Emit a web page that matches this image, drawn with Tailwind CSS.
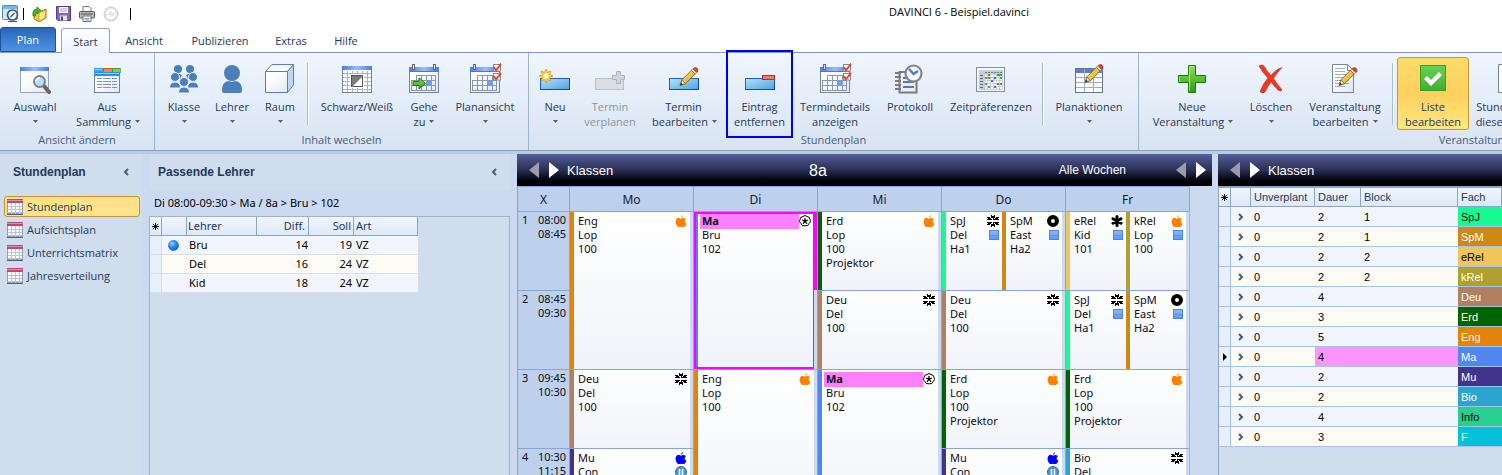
<!DOCTYPE html>
<html lang="de">
<head>
<meta charset="utf-8">
<title>DAVINCI 6 - Beispiel.davinci</title>
<script src="https://cdn.jsdelivr.net/npm/@tailwindcss/browser@4"></script>
</head>
<body class="bg-white">

<svg width="0" height="0" class="absolute" aria-hidden="true">
  <defs>
    <linearGradient id="gBar" x1="0" x2="1" y1="0" y2="0"><stop offset="0" stop-color="#4a7bea"/><stop offset=".5" stop-color="#9dbcfa"/><stop offset="1" stop-color="#4a7bea"/></linearGradient>
    <linearGradient id="gPaper" x1="0" x2="1" y1="0" y2="1"><stop offset=".3" stop-color="#fff"/><stop offset="1" stop-color="#dfe7f4"/></linearGradient>
    <linearGradient id="gSlot" x1="0" x2="1" y1="0" y2="1"><stop offset="0" stop-color="#b5e2fa"/><stop offset="1" stop-color="#4f9fe2"/></linearGradient>
    <linearGradient id="gGreen" x1="0" x2="0" y1="0" y2="1"><stop offset="0" stop-color="#8fe05c"/><stop offset="1" stop-color="#2f9a12"/></linearGradient>
    <linearGradient id="gPen" x1="0" x2="1" y1="0" y2="1"><stop offset="0" stop-color="#ffe97a"/><stop offset="1" stop-color="#d99a10"/></linearGradient>
    <radialGradient id="gBall" cx=".35" cy=".3" r=".8"><stop offset="0" stop-color="#8fd0ff"/><stop offset=".5" stop-color="#1d8cf4"/><stop offset="1" stop-color="#0b62d0"/></radialGradient>
    <linearGradient id="gBox" x1="0" x2="0" y1="0" y2="1"><stop offset="0" stop-color="#8db9fb"/><stop offset="1" stop-color="#5a96f4"/></linearGradient>
  </defs>
  <symbol id="pencil" viewBox="0 0 24 24">
    <path d="M2 22 4 15.500 15.500 4 20 8.500 8.500 20Z" fill="url(#gPen)" stroke="#7b5a14" stroke-width="1"/>
    <path d="M2 22 4 15.500 8.500 20Z" fill="#f3d9ac" stroke="#6b5a3a" stroke-width=".8"/><path d="M2 22 3 18.700 5.300 21Z" fill="#333"/>
    <path d="M15.500 4 17.500 2 22 6.500 20 8.500Z" fill="#ddd" stroke="#666" stroke-width=".8"/>
    <path d="M17.500 2 19 .8Q21 0 22.500 1.500 24 3.500 23.200 5L22 6.500Z" fill="#e8402c" stroke="#9c2013" stroke-width=".6"/>
  </symbol>
  <symbol id="slot" viewBox="0 0 32 32"><rect x="1.500" y="15.500" width="29" height="11" fill="url(#gSlot)" stroke="#1c62c4"/><path d="M30.500 15V26.500H1" fill="none" stroke="#164ea6"/></symbol>
  <symbol id="cal" viewBox="0 0 32 32" shape-rendering="crispEdges">
    <rect x="1.500" y="4.500" width="29" height="25" fill="url(#gPaper)" stroke="#74849c"/>
    <rect x="1" y="4" width="30" height="5" fill="url(#gBar)"/><path d="M1 8.500h30" stroke="#4a76d8"/>
    <path d="M8 12.500h20M3 17.500h25M3 22.500h25M3 27.500h25M3.500 17v11M8.500 12v16M13.500 12v16M18.500 12v16M23.500 12v16M27.500 12v16" stroke="#8596ad" fill="none"/>
    <rect x="4.500" y="1.500" width="2" height="5" fill="#ddd" stroke="#666"/>
  </symbol>
  <symbol id="checks" viewBox="0 0 10 18"><rect x="1.500" y="1.500" width="7" height="6.500" fill="#fff" stroke="#888"/><rect x="1.500" y="10.500" width="7" height="6.500" fill="#fff" stroke="#888"/><path d="M1.500 4 4 7 9.500 .5M1.500 13 4 16 9.500 9.500" fill="none" stroke="#f03820" stroke-width="1.800"/></symbol>
  <symbol id="sheet" viewBox="0 0 16 16" shape-rendering="crispEdges"><rect x=".5" y=".5" width="15" height="14" fill="#fff" stroke="#8fa0ba"/><rect width="16" height="4" fill="#b84a74"/><rect y="1" width="16" height="1" fill="#dc90ac"/><path d="M1 7.500h14M1 10.500h14M1 13.500h14M4.500 4v11M8.500 4v11M12.500 4v11" stroke="#b9c4d6"/><path d="M0 15.500h16" stroke="#4d6080"/></symbol>
  <symbol id="apple" viewBox="0 0 12 13"><path fill="currentColor" d="M8 0q.3 2-1.800 3.200Q6 1.200 8 0ZM6 4q1.500-1 3.300-.8Q10.500 3.500 11.300 4.500 9.800 5.700 10 7.300q.2 1.500 2 2.200Q11 12 9.300 13 8 13.200 6 12.600 4.200 13.200 3 13 1 12 .3 9 -.3 6 1 4.300 2.300 2.700 4 3.200Q5 3.400 6 4Z"/></symbol>
  <symbol id="flower" viewBox="0 0 12 12" shape-rendering="crispEdges"><path fill="currentColor" d="M4 0h1v1h2V0h1v3H4ZM4 12h1v-1h2v1h1V9H4ZM0 2h3v1h1v2H0V4h1V3H0ZM12 2H9v1H8v2h4V4h-1V3h1ZM0 10h3V9h1V7H0v1h1v1H0ZM12 10H9V9H8V7h4v1h-1v1h1ZM5.500 3h1v2h-1ZM5.500 7h1v2h-1ZM4 4h1v1H4ZM7 4h1v1H7ZM4 7h1v1H4ZM7 7h1v1H7Z"/></symbol>
  <symbol id="ring" viewBox="0 0 12 12"><circle cx="6" cy="6" r="4" fill="none" stroke="currentColor" stroke-width="4"/></symbol>
  <symbol id="aster" viewBox="0 0 12 12"><path d="M6 1.500v9M2 3.700l8 4.600M10 3.700l-8 4.600" stroke="currentColor" stroke-width="3" stroke-linecap="round"/></symbol>
  <symbol id="bloom" viewBox="0 0 12 12"><circle cx="6" cy="6" r="5" fill="#fff"/><path d="M4 1.500Q6-.5 8 1.500q3 .2 3 3Q12.500 7 10 8.500 9.500 11.500 6 10.800 2.500 11.500 2 8.500-.5 7 1 4.500q0-2.800 3-3Z" fill="#fff" stroke="currentColor"/><path d="M6 3v3l3-1M6 6l2 3M6 6l-2 3M6 6 3 5" stroke="currentColor" stroke-width="1.200" fill="none"/><circle cx="6" cy="6" r="1.500"/></symbol>
  <symbol id="box" viewBox="0 0 12 12"><rect x="2.500" y="1.500" width="9" height="9" fill="url(#gBox)" stroke="#4b86e4"/><path d="M3 6.500h8" stroke="#4b86f4" stroke-opacity=".5"/></symbol>
  <symbol id="pause" viewBox="0 0 12 12"><circle cx="6" cy="6" r="5.500" fill="#4c97d4" stroke="#2a6cab"/><path d="M4.500 3v6M7.500 3v6" stroke="#fff" stroke-width="1.500"/></symbol>
  <symbol id="left" viewBox="0 0 10 16"><path d="M10 0v16L0 8Z" fill="currentColor"/></symbol>
  <symbol id="right" viewBox="0 0 10 16"><path d="M0 0v16l10-8Z" fill="currentColor"/></symbol>
  <symbol id="chevR" viewBox="0 0 6 8"><path d="M1 1l3 3-3 3" fill="none" stroke="#4a5a7c" stroke-width="2"/></symbol>
  <symbol id="chevL" viewBox="0 0 6 8"><path d="M5 1 2 4l3 3" fill="none" stroke="#4a5a7c" stroke-width="2"/></symbol>
  <symbol id="star" viewBox="0 0 8 8"><path d="M4 0v8M0 4h8M1 1l6 6M7 1 1 7" stroke="#000" stroke-width="1"/></symbol>
  <symbol id="drop" viewBox="0 0 5 3"><path d="M0 0h5L2.500 3Z" fill="#5c6068"/></symbol>
</svg>

<div class="flex h-screen flex-col overflow-hidden font-['Open_Sans','Noto_Sans',sans-serif] text-[11px] leading-[15px] text-[#1e395b]">

  <!-- title bar -->
  <header class="flex h-[27px] flex-none items-center">
    <div class="flex w-[416px] flex-none items-center">
      <svg class="ml-[2px] h-[18px] w-[18px]" viewBox="0 0 18 18"><rect x=".5" y=".5" width="15" height="14" rx="1" fill="#d6e8f8" stroke="#4a8ec6"/><rect x="1" y="1" width="14" height="3" fill="#7db4e0"/><circle cx="10.500" cy="10" r="5" fill="#eef5fc" stroke="#33557a" stroke-width="1.700"/><path d="m8.500 12 4-4" stroke="#33557a" stroke-width="1.300"/><path d="M6 16.500h9" stroke="#33557a"/></svg>
      <span class="ml-[3px] h-[12px] w-px bg-black"></span>
      <button type="button" aria-label="Öffnen" class="ml-2"><svg class="h-4 w-4" viewBox="0 0 16 16"><path d="M2 5 5 3.500 9 5l5-2v9l-7 4-5-3Z" fill="#f5c93a" stroke="#a87f12"/><path d="M7 7l7-3-1 8-6 3.500Z" fill="#ffe68a" stroke="#b98f1c" stroke-width=".7"/><path d="M1 10Q0 3 5 3V1l4 3.500L5 8V6Q3 6 3.500 10Z" fill="#44b82c" stroke="#1c7a10" stroke-width=".7"/></svg></button>
      <button type="button" aria-label="Speichern" class="ml-2"><svg class="h-[15px] w-[15px]" viewBox="0 0 15 15"><path d="M.5.5h14v14H2L.5 13Z" fill="#8468b4" stroke="#553a88"/><rect x="3" y="1" width="9" height="6" fill="#f4f2fa"/><path d="M4 3h7M4 5h7" stroke="#b3a8cc"/><rect x="4" y="9.500" width="7" height="5" fill="#e6e2f0"/><rect x="5" y="10.500" width="2" height="4" fill="#553a88"/></svg></button>
      <button type="button" aria-label="Drucken" class="ml-2"><svg class="h-4 w-4" viewBox="0 0 16 16"><path d="M4 6V.5h6L12 2.500V6" fill="#fff" stroke="#777"/><rect x=".5" y="5.500" width="15" height="6.500" rx="1" fill="#b8bcc2" stroke="#555"/><path d="M2 8h12" stroke="#4a4e55"/><path d="M4 10h8v5.500H4Z" fill="#fff" stroke="#777"/><path d="M5.500 12.500h5M5.500 14h5" stroke="#60a0d8"/></svg></button>
      <button type="button" aria-label="Aktualisieren" disabled class="ml-2"><svg class="h-4 w-4" viewBox="0 0 16 16"><circle cx="8" cy="8" r="7" fill="#e4e4e4" stroke="#cdcdcd"/><path d="M4 8a4 4 0 0 1 7-2.500M12 8a4 4 0 0 1-7 2.500" fill="none" stroke="#fff" stroke-width="2"/><path d="M12 3v4H8ZM4 13V9h4Z" fill="#fff"/></svg></button>
      <span class="ml-[11px] h-[12px] w-px bg-black"></span>
    </div>
    <h1 class="flex-1 pb-1 text-center text-black">DAVINCI 6 - Beispiel.davinci</h1>
  </header>

  <!-- ribbon tabs -->
  <nav class="flex h-[26px] flex-none items-end border-b border-[#7b9cc0]" aria-label="Menüband">
    <button type="button" class="h-[25px] w-[56px] rounded-t-[3px] border border-[#1f4f9c] bg-linear-to-b from-[#2a66b8] to-[#4d93e6] text-white">Plan</button>
    <button type="button" class="-mb-px ml-[5px] h-[25px] w-[49px] rounded-t-[3px] border border-b-0 border-[#8ea6c4] bg-linear-to-b from-white to-[#edf4fd]">Start</button>
    <button type="button" class="h-[23px] w-[68px]">Ansicht</button>
    <button type="button" class="h-[23px] w-[84px]">Publizieren</button>
    <button type="button" class="h-[23px] w-[58px]">Extras</button>
    <button type="button" class="h-[23px] w-[52px]">Hilfe</button>
  </nav>

  <!-- ribbon -->
  <div class="flex h-[98px] flex-none border-b border-[#8ba3c2] bg-linear-to-b from-[#eff6fe] to-[#d8e4f2]">
    <section class="flex w-[155px] flex-none flex-col border-r border-[#9db3d0]">
      <div class="flex h-[79px] pt-[4px]">
        <button type="button" class="flex w-[70px] flex-col items-center pt-[6px]"><svg class="mb-1 h-8 w-8" viewBox="0 0 32 32"><rect x="1.500" y="4.500" width="28" height="25" fill="url(#gPaper)" stroke="#9aa7ba"/><rect x="1" y="4" width="29" height="4" fill="url(#gBar)"/><path d="m25 23 5 6" stroke="#6e6460" stroke-width="4" stroke-linecap="round"/><circle cx="20.500" cy="18.500" r="5.500" fill="#b9dcf8" stroke="#77818e" stroke-width="1.800"/><path d="M17 18a4 4 0 0 1 4-3" stroke="#fff" stroke-width="1.500" fill="none"/></svg>Auswahl<svg class="mt-[6px] h-[3px] w-[5px]"><use href="#drop"/></svg></button>
        <button type="button" class="flex w-[74px] flex-col items-center pt-[6px]"><svg class="mb-1 h-8 w-8" viewBox="0 0 32 32" shape-rendering="crispEdges"><rect x="3.500" y="8.500" width="25" height="21" fill="url(#gPaper)" stroke="#74849c"/><rect x="3" y="5" width="9" height="8" fill="#3aa0f0"/><rect x="12" y="5" width="9" height="4" fill="#f08a3c" stroke="#b04818" stroke-width=".7"/><rect x="21" y="5" width="8" height="4" fill="#7ed23c" stroke="#3c8a18" stroke-width=".7"/><rect x="3" y="9" width="26" height="4" fill="#2f8ee8"/><path d="M4 6.500h7M4 10h24" stroke="#8fd0ff"/><path d="M6 15.500h20M6 18.500h20M6 21.500h20M6 24.500h20" stroke="#7e93cf" stroke-dasharray="5 1 8 1"/></svg>Aus<span class="flex items-center gap-1 pl-[2px]">Sammlung<svg class="h-[3px] w-[5px]"><use href="#drop"/></svg></span></button>
      </div>
      <h2 class="text-center text-[#3f5d85]">Ansicht ändern</h2>
    </section>

    <section class="flex w-[374px] flex-none flex-col border-r border-[#9db3d0]">
      <div class="flex h-[79px] pt-[4px] pl-[5px]">
        <button type="button" class="flex w-12 flex-col items-center pt-[6px]"><svg class="mb-1 h-8 w-8" viewBox="0 0 32 32" fill="#4a80b8"><circle cx="10" cy="6" r="4"/><circle cx="22" cy="6" r="4"/><path d="M6 12q4-3 8 0l-2 4H6ZM18 12q4-3 8 0v4h-6Z"/><g stroke="#e8f0fa" stroke-width="1"><circle cx="7" cy="14" r="4.500"/><circle cx="25" cy="14" r="4.500"/><path d="M1.500 25q0-6 5.500-6t5.500 6ZM19.500 25q0-6 5.500-6t5.500 6Z"/><circle cx="16" cy="19" r="4.500"/><path d="M10.500 30q0-6 5.500-6t5.500 6Z"/></g></svg>Klasse<svg class="mt-[6px] h-[3px] w-[5px]"><use href="#drop"/></svg></button>
        <button type="button" class="flex w-12 flex-col items-center pt-[6px]"><svg class="mb-1 h-8 w-8" viewBox="0 0 32 32" fill="#4a80b8"><circle cx="16" cy="10" r="8"/><path d="M6 28q0-10 7-10 3 1.500 6 0 7 0 7 10 0 2-2 2H8q-2 0-2-2Z"/></svg>Lehrer<svg class="mt-[6px] h-[3px] w-[5px]"><use href="#drop"/></svg></button>
        <button type="button" class="flex w-12 flex-col items-center pt-[6px]"><svg class="mb-1 h-8 w-8" viewBox="0 0 32 32" stroke="#5b7cb4" stroke-linejoin="round"><path d="M1.500 8.500 8 1.500h21.500l-6 7Z" fill="#f5f9ff"/><path d="m23.500 8.500 6-7V22l-6 7.500Z" fill="#c3d5f2"/><path d="M1.500 8.500h22v21h-22Z" fill="url(#gPaper)"/></svg>Raum<svg class="mt-[6px] h-[3px] w-[5px]"><use href="#drop"/></svg></button>
        <span class="mr-px ml-[3px] mt-[6px] h-[62px] w-[2px] border-r border-white bg-[#a9bbd3]"></span>
        <button type="button" class="flex w-[94px] flex-col items-center pt-[6px]"><svg class="mb-1 h-8 w-8" viewBox="0 0 32 32" shape-rendering="crispEdges"><rect x="1.500" y="3.500" width="29" height="26" fill="#fff" stroke="#74849c"/><path d="M2 10.500h28M2 14.500h28M2 18.500h28M2 22.500h28M2 26.500h28M6.500 8v21M11.500 8v21M16.500 8v21M21.500 8v21M26.500 8v21" stroke="#a6b3c5"/><rect x="1" y="3" width="30" height="4" fill="url(#gBar)"/><rect x="9" y="11" width="14" height="14" fill="#fff"/><path d="M10.500 12.500h11v11h-11Z" fill="#fff" stroke="#555"/><path d="M11 13h11L11 24Z" fill="#7c7c7c" shape-rendering="auto"/></svg>Schwarz/Weiß</button>
        <button type="button" class="flex w-10 flex-col items-center pt-[6px]"><svg class="mb-1 h-8 w-8" viewBox="0 0 32 32"><use href="#cal"/><rect x="25.500" y="1.500" width="2" height="5" fill="#ddd" stroke="#666"/><rect x="19" y="18" width="5" height="5" fill="#6f9cf5"/><path d="M5 18.500h6V15l6.500 5.500L11 26v-3.500H5Z" fill="url(#gGreen)" stroke="#1d7a0c"/></svg>Gehe<span class="flex items-center gap-1">zu<svg class="h-[3px] w-[5px]"><use href="#drop"/></svg></span></button>
        <button type="button" class="flex w-[82px] flex-col items-center pt-[6px]"><svg class="mb-1 h-8 w-8" viewBox="0 0 32 32"><use href="#cal"/><rect x="19" y="18" width="5" height="5" fill="#6f9cf5"/><use href="#checks" x="23" y="0" width="10" height="18"/></svg>Planansicht<svg class="mt-[6px] h-[3px] w-[5px]"><use href="#drop"/></svg></button>
      </div>
      <h2 class="text-center text-[#3f5d85]">Inhalt wechseln</h2>
    </section>

    <section class="flex w-[610px] flex-none flex-col border-r border-[#9db3d0]">
      <div class="flex h-[79px] pt-[4px] pl-[2px]">
        <button type="button" class="flex w-12 flex-col items-center pt-[6px]"><svg class="mb-1 h-8 w-8" viewBox="0 0 32 32"><use href="#slot"/><path d="m7 6 1.500 3.500L12 8l-1.500 3.500L14 13l-3.500 1.500L12 18l-3.500-1.500L7 20l-1.500-3.500L2 18l1.500-3.500L0 13l3.500-1.500L2 8l3.500 1.500Z" fill="#ffd83a" stroke="#d9981a" stroke-width=".8"/><circle cx="7" cy="13" r="2.500" fill="#fffbd0"/></svg>Neu<svg class="mt-[6px] h-[3px] w-[5px]"><use href="#drop"/></svg></button>
        <button type="button" disabled class="flex w-[62px] flex-col items-center pt-[6px] text-[#8f949b]"><svg class="mb-1 h-8 w-8" viewBox="0 0 32 32"><rect x="1.500" y="15.500" width="28" height="11" fill="#dbdfe5" stroke="#bcc1c9"/><path d="M22.500 8.500h4v4h4v4h-4v4h-4v-4h-4v-4h4Z" fill="#d3d7dd" stroke="#b0b5bd"/></svg>Termin<span>verplanen</span></button>
        <button type="button" class="flex w-[85px] flex-col items-center pt-[6px]"><svg class="mb-1 h-8 w-8" viewBox="0 0 32 32"><use href="#slot"/><use href="#pencil" x="10" y="4" width="21" height="20"/></svg>Termin<span class="flex items-center gap-1 pl-[2px]">bearbeiten<svg class="h-[3px] w-[5px]"><use href="#drop"/></svg></span></button>
        <button type="button" class="relative flex w-[67px] flex-col items-center pt-[6px]"><svg class="mb-1 h-8 w-8" viewBox="0 0 32 32"><use href="#slot"/><rect x="18.500" y="12.500" width="12" height="4" fill="#f4796a" stroke="#c8281a"/></svg>Eintrag<span>entfernen</span><span class="absolute inset-x-0 -top-[7px] bottom-[-6px] border-2 border-[#0000f0]"></span></button>
        <button type="button" class="flex w-[84px] flex-col items-center pt-[6px]"><svg class="mb-1 h-8 w-8" viewBox="0 0 32 32"><use href="#cal"/><rect x="19" y="18" width="5" height="5" fill="#6f9cf5"/><use href="#checks" x="23" y="0" width="10" height="18"/></svg>Termindetails<span>anzeigen</span></button>
        <button type="button" class="flex w-[66px] flex-col items-center pt-[6px]"><svg class="mb-1 h-8 w-8" viewBox="0 0 32 32"><rect x="5.500" y="9" width="17" height="20.500" fill="#e9eff8" stroke="#7b7b7b" stroke-width="2"/><path d="M1 10h6M1 14h6M1 18h6M1 22h6M1 26h6" stroke="#7b7b7b" stroke-width="2"/><path d="M9 15h8M9 19h11M9 24h11" stroke="#4a80b8" stroke-width="2"/><circle cx="19.500" cy="10.500" r="8" fill="#f2f6fc" stroke="#858585" stroke-width="2.200"/><path d="m15 6 4.500 5L24 8" fill="none" stroke="#4a80b8" stroke-width="2.400"/></svg>Protokoll</button>
        <button type="button" class="flex w-24 flex-col items-center pt-[6px]"><svg class="mb-1 h-8 w-8" viewBox="0 0 32 32" shape-rendering="crispEdges"><rect x="1.500" y="4.500" width="28" height="24" fill="#f4f6fa" stroke="#8290a6"/><rect x="4" y="7" width="24" height="20" fill="#c6ced9"/><path d="M5 12h3M5 15h3M5 18h3M5 21h3M5 24h3" stroke="#55657f"/><path d="M10 9h17" stroke="#6d7b92" stroke-dasharray="2 1"/><path d="M10 12.500h17M10 15.500h17M10 18.500h17M10 21.500h17M10 24.500h17" stroke="#fff" stroke-width="2" stroke-dasharray="2 1"/><g fill="#38a838"><rect x="13" y="11" width="2" height="2"/><rect x="22" y="11" width="5" height="2"/><rect x="10" y="14" width="2" height="2"/><rect x="25" y="14" width="2" height="2"/><rect x="10" y="20" width="2" height="2"/><rect x="25" y="20" width="2" height="2"/><rect x="13" y="23" width="2" height="2"/></g><rect x="13" y="14" width="2" height="2" fill="#e04030"/><rect x="22" y="20" width="2" height="2" fill="#e04030"/><rect x="19" y="14" width="2" height="2" fill="#2f6fe0"/><rect x="16" y="17" width="2" height="2" fill="#2f6fe0"/><rect x="19" y="23" width="2" height="2" fill="#2f6fe0"/></svg>Zeitpräferenzen</button>
        <span class="mr-px ml-[3px] mt-[6px] h-[62px] w-[2px] border-r border-white bg-[#a9bbd3]"></span>
        <button type="button" class="flex w-[88px] flex-col items-center pt-[6px]"><svg class="mb-1 h-8 w-8" viewBox="0 0 32 32"><g shape-rendering="crispEdges"><rect x="2.500" y="5.500" width="27" height="24" fill="#fff" stroke="#64748c"/><rect x="3" y="6" width="27" height="4" fill="#5b82c8"/><path d="M3 14.500h26M3 19.500h26M3 24.500h26M11.500 6v23M20.500 6v23" stroke="#a0adc0"/></g><use href="#pencil" x="10" y="1" width="21" height="20"/></svg>Planaktionen<svg class="mt-[6px] h-[3px] w-[5px]"><use href="#drop"/></svg></button>
      </div>
      <h2 class="text-center text-[#3f5d85]">Stundenplan</h2>
    </section>

    <section class="flex w-[684px] flex-none flex-col">
      <div class="flex h-[79px] pt-[4px] pl-[4px]">
        <button type="button" class="flex w-[98px] flex-col items-center pt-[6px]"><svg class="mb-1 h-8 w-8" viewBox="0 0 32 32"><path d="M12.500 2.500h7v10h10v7h-10v10h-7v-10h-10v-7h10Z" fill="url(#gGreen)" stroke="#1a7a08"/><path d="M13.500 28V3.500h5M3.500 19v-5.500" fill="none" stroke="#b4f08c" stroke-opacity=".8"/></svg>Neue<span class="flex items-center gap-1 pl-[2px]">Veranstaltung<svg class="h-[3px] w-[5px]"><use href="#drop"/></svg></span></button>
        <button type="button" class="flex w-[60px] flex-col items-center pt-[6px]"><svg class="mb-1 h-8 w-8" viewBox="0 0 32 32"><path d="M4 3q3-2 5 0 3 6 7 9.500Q21 6 27 4.500q-6 6-8.500 11Q22 21 27 27q-1 2-4 0-4-4-7-8-4 5-6 10-3 2-5-.5 3-8 8-13.500Q7 9 4 3Z" fill="#ee3820" stroke="#c22412" stroke-width=".6"/></svg>Löschen<svg class="mt-[6px] h-[3px] w-[5px]"><use href="#drop"/></svg></button>
        <button type="button" class="flex w-[88px] flex-col items-center pt-[6px]"><svg class="mb-1 h-8 w-8" viewBox="0 0 32 32"><path d="M3.500 1.500h15l6 6v22h-21Z" fill="url(#gPaper)" stroke="#74849c"/><path d="M18.500 1.500v6h6" fill="none" stroke="#74849c"/><path d="M6 5.500h10M6 8.500h10M6 11.500h14M6 14.500h14M6 17.500h14M6 20.500h14M6 23.500h10" stroke="#9aadd2"/><use href="#pencil" x="8" y="4" width="21" height="20"/></svg>Veranstaltung<span class="flex items-center gap-1">bearbeiten<svg class="h-[3px] w-[5px]"><use href="#drop"/></svg></span></button>
        <span class="mr-px ml-[3px] mt-[6px] h-[62px] w-[2px] border-r border-white bg-[#a9bbd3]"></span>
        <button type="button" aria-pressed="true" class="ml-[2px] flex h-[73px] w-[72px] flex-col items-center rounded-[3px] border border-[#c29a3a] bg-linear-to-b from-[#fcdc6a] via-[#ffd05e] to-[#ffe880] pt-[5px]"><svg class="mb-1 h-8 w-8" viewBox="0 0 32 32"><rect x="3.500" y="2.500" width="25" height="25" fill="url(#gGreen)" stroke="#3a9c2c"/><rect x="4" y="3" width="24" height="24" fill="#4cc44a" fill-opacity=".55"/><path d="m7 16 3-3 4 4 8-8 3 3-11 11Z" fill="#fff"/></svg>Liste<span>bearbeiten</span></button>
        <button type="button" class="ml-[2px] flex w-[76px] flex-col items-center pt-[6px]"><svg class="mb-1 h-8 w-8" viewBox="0 0 32 32"><path d="M5.500 1.500h16l6 6v22h-22Z" fill="url(#gPaper)" stroke="#74849c"/></svg>Stundenplan<span>dieser Klasse</span></button>
      </div>
      <h2 class="text-center text-[#3f5d85]">Veranstaltungen</h2>
    </section>
  </div>

  <!-- workspace -->
  <main class="flex min-h-0 flex-1 border-t-[3px] border-[#b9cbe2] bg-[#ccdaf1]">
    <aside class="w-[142px] flex-none bg-[#d0dded]">
      <h2 class="flex h-9 items-center justify-between pr-[13px] pl-[13px] font-['Liberation_Sans',Arial,sans-serif] text-[12px] font-bold">Stundenplan<button type="button" aria-label="Einklappen"><svg class="h-2 w-[6px]"><use href="#chevL"/></svg></button></h2>
      <nav class="mt-[6px] flex flex-col gap-[2px] pr-[2px] pl-1">
        <a href="#" aria-current="page" class="flex h-[21px] items-center gap-1 rounded-[3px] border border-[#c8923c] bg-linear-to-b from-[#ffe089] to-[#ffe48c] pl-[2px]"><svg class="h-4 w-4"><use href="#sheet"/></svg>Stundenplan</a>
        <a href="#" class="flex h-[21px] items-center gap-1 pl-[3px]"><svg class="h-4 w-4"><use href="#sheet"/></svg>Aufsichtsplan</a>
        <a href="#" class="flex h-[21px] items-center gap-1 pl-[3px]"><svg class="h-4 w-4"><use href="#sheet"/></svg>Unterrichtsmatrix</a>
        <a href="#" class="flex h-[21px] items-center gap-1 pl-[3px]"><svg class="h-4 w-4"><use href="#sheet"/></svg>Jahresverteilung</a>
      </nav>
    </aside>

    <section class="ml-[7px] flex w-[361px] flex-none flex-col bg-[#d0dded]">
      <h2 class="flex h-9 items-center justify-between pr-[13px] pl-[9px] font-['Liberation_Sans',Arial,sans-serif] text-[12px] font-bold">Passende Lehrer<button type="button" aria-label="Einklappen"><svg class="h-2 w-[6px]"><use href="#chevL"/></svg></button></h2>
      <p class="flex h-[26px] items-center bg-[#ccdaf1] pb-[2px] pl-[5px] font-['Noto_Sans',sans-serif] text-black">Di 08:00-09:30 &gt; Ma / 8a &gt; Bru &gt; 102</p>
      <div class="flex-1 border border-b-0 border-[#9db2d0]">
        <table class="w-[268px] table-fixed border-separate border-spacing-0 font-['Noto_Sans',sans-serif] leading-[18px] text-black">
          <colgroup><col class="w-[12px]"><col class="w-[25px]"><col class="w-[70px]"><col class="w-[52px]"><col class="w-[45px]"><col class="w-[64px]"></colgroup>
          <thead class="bg-linear-to-b from-[#f0f6fe] to-[#dce8f7] text-[#1e395b]"><tr class="h-[19px] *:border-r *:border-b *:border-[#8ba5c8] *:p-0 *:font-normal">
            <th><svg class="mx-auto h-[7px] w-[7px]" viewBox="0 0 8 8"><use href="#star"/></svg></th><th></th><th><div class="pl-px text-left">Lehrer</div></th><th><div class="pr-[3px] text-right">Diff.</div></th><th><div class="pr-[2px] text-right">Soll</div></th><th><div class="pl-[2px] text-left">Art</div></th></tr></thead>
          <tbody id="teachers"></tbody>
        </table>
      </div>
    </section>

    <section class="ml-[7px] flex w-[695px] flex-none flex-col">
      <header class="flex h-8 flex-none items-center bg-linear-to-b from-[#55609c] via-[#2a2f55] to-black font-['Liberation_Sans',Arial,sans-serif] text-[12px] text-white">
        <div class="flex w-[292px] items-center gap-[10px] pl-[12px]"><button type="button" aria-label="Zurück" class="text-[#9a9cac]"><svg class="h-4 w-[10px]"><use href="#left"/></svg></button><button type="button" aria-label="Weiter"><svg class="h-4 w-[10px]"><use href="#right"/></svg></button><span class="-ml-[2px] text-[13px]">Klassen</span></div>
        <span class="text-[16px]">8a</span>
        <div class="ml-auto flex items-center gap-[10px] pr-[6px]"><span class="pr-[40px]">Alle Wochen</span><button type="button" aria-label="Vorige Woche" class="text-[#9a9cac]"><svg class="h-4 w-[10px]"><use href="#left"/></svg></button><button type="button" aria-label="Nächste Woche"><svg class="h-4 w-[10px]"><use href="#right"/></svg></button></div>
      </header>
      <div class="mr-[22px] grid h-[25px] flex-none grid-cols-[52px_repeat(5,minmax(0,1fr))] border-t border-r border-[#86a6da] bg-[#bdd1ec] font-['Noto_Sans',sans-serif] text-[12px] leading-[26px] text-[#101a2c] *:border-l *:border-[#86a6da] *:text-center">
        <span>X</span><span>Mo</span><span>Di</span><span>Mi</span><span>Do</span><span>Fr</span>
      </div>
      <div id="plan" class="mr-[22px] grid grid-cols-[52px_repeat(5,minmax(0,1fr))] grid-rows-[repeat(4,79px)] border-r border-[#9db8e2] font-['Noto_Sans',sans-serif] leading-[14px] text-[#0c0c14]"></div>
    </section>

    <section class="ml-[6px] flex min-w-0 flex-1 flex-col overflow-hidden bg-[#d0dded]">
      <header class="flex h-8 flex-none items-center gap-[10px] bg-linear-to-b from-[#55609c] via-[#2a2f55] to-black pl-[12px] font-['Liberation_Sans',Arial,sans-serif] text-[13px] text-white"><button type="button" aria-label="Zurück" class="text-[#9a9cac]"><svg class="h-4 w-[10px]"><use href="#left"/></svg></button><button type="button" aria-label="Weiter"><svg class="h-4 w-[10px]"><use href="#right"/></svg></button><span class="-ml-[2px]">Klassen</span></header>
      <div class="flex-1 border-t-2 border-l border-[#8ba5c8]">
        <table class="w-full table-fixed border-separate border-spacing-0 font-['Liberation_Sans',Arial,sans-serif] leading-[18px] text-black">
          <colgroup><col class="w-[12px]"><col class="w-[20px]"><col class="w-[64px]"><col class="w-[46px]"><col class="w-[97px]"><col></colgroup>
          <thead class="bg-linear-to-b from-[#f0f6fe] to-[#dce8f7] text-[#1e395b]"><tr class="h-[19px] *:border-r *:border-b *:border-[#8ba5c8] *:p-0 *:text-left *:font-normal">
            <th><svg class="mx-auto h-[7px] w-[7px]" viewBox="0 0 8 8"><use href="#star"/></svg></th><th></th><th><div class="pl-[3px]">Unverplant</div></th><th><div class="pl-[3px]">Dauer</div></th><th><div class="pl-[3px]">Block</div></th><th><div class="pl-[3px]">Fach</div></th></tr></thead>
          <tbody id="courses"></tbody>
        </table>
      </div>
    </section>
  </main>
</div>

<script>
const icon = (name, cls) => `<svg class="${cls || 'h-3 w-3'}"><use href="#${name}"/></svg>`;

// available teachers
document.getElementById('teachers').innerHTML = [
  ['Bru', 14, 19, 'VZ'], ['Del', 16, 24, 'VZ'], ['Kid', 18, 24, 'VZ']
].map((r, i) => `<tr class="h-[19px] *:border-b *:border-[#d3e0f1] *:p-0 ${i % 2 ? 'bg-[#fcfcf4]' : 'bg-[#f2f6fc]'}">
  <td class="border-r border-r-[#8ba5c8] border-b-[#8ba5c8] bg-[#e6effa]"></td>
  <td><div class="pr-[3px]">${i ? '' : '<svg class="mx-auto h-[11px] w-[11px]" viewBox="0 0 12 12"><circle cx="6" cy="6" r="5.500" fill="url(#gBall)" stroke="#0b5cc0" stroke-width=".7"/></svg>'}</div></td>
  <td><div class="pl-[2px]">${r[0]}</div></td><td><div class="pr-px text-right">${r[1]}</div></td><td><div class="pr-[2px] text-right">${r[2]}</div></td><td><div class="pl-[2px]">${r[3]}</div></td></tr>`).join('');

// courses of the class: duration, block, subject, colour, text colour
document.getElementById('courses').innerHTML = [
  [2, 1, 'SpJ', '#18fb92', '#000'], [2, 1, 'SpM', '#d08814', '#fff'], [2, 2, 'eRel', '#f0c65c', '#000'],
  [2, 2, 'kRel', '#b0a030', '#fff'], [4, '', 'Deu', '#b08060', '#fff'], [3, '', 'Erd', '#006400', '#fff'],
  [5, '', 'Eng', '#e4820a', '#fff'], [4, '', 'Ma', '#4f86f0', '#fff'], [2, '', 'Mu', '#42348c', '#fff'],
  [2, '', 'Bio', '#2ca4d0', '#fff'], [4, '', 'Info', '#28d090', '#000'], [3, '', 'F', '#04c0d8', '#fff']
].map((r, i) => `<tr class="h-[20px] *:border-b *:border-[#a3c5ea] *:p-0 ${i % 2 ? 'bg-[#fcfcf4]' : 'bg-[#f2f6fc]'}">
  <td class="border-r border-r-[#8ba5c8] border-b-[#8ba5c8] bg-[#e6effa]">${i === 7 ? '<svg class="mx-auto h-[8px] w-[4px]" viewBox="0 0 4 8"><path d="M0 0v8l4-4Z"/></svg>' : ''}</td>
  <td>${icon('chevR', 'mx-auto h-2 w-[6px]')}</td><td><div class="pl-[3px]">0</div></td>
  <td class="${i === 7 ? 'bg-[#ff94fc]' : ''}"><div class="pl-[3px]">${r[0]}</div></td>
  <td class="${i === 7 ? 'bg-[#ff94fc]' : ''}"><div class="pl-[3px]">${r[1]}</div></td>
  <td style="background:${r[3]};color:${r[4]}"><div class="pl-[3px]">${r[2]}</div></td></tr>`).join('');

// timetable
const C = { Eng: '#e4820a', Ma: '#4f86f0', Erd: '#006400', SpJ: '#18fb92', SpM: '#d08814', eRel: '#f0c65c', kRel: '#b0a030', Deu: '#b08060', Mu: '#42348c', Bio: '#2ca4d0' };
const times = [['08:00', '08:45'], ['08:45', '09:30'], ['09:45', '10:30'], ['10:30', '11:15']];
// column, row, span, lessons: [lines, icon, second icon, selected]
const slots = [
  [2, 1, 2, [['Eng Lop 100', 'apple']]],
  [3, 1, 2, [['Ma Bru 102', 'bloom', '', true]]],
  [4, 1, 1, [['Erd Lop 100 Projektor', 'apple']]],
  [5, 1, 1, [['SpJ Del Ha1', 'flower', 'box'], ['SpM East Ha2', 'ring', 'box']]],
  [6, 1, 1, [['eRel Kid 101', 'aster', 'box'], ['kRel Lop 100', 'apple', 'box']]],
  [4, 2, 1, [['Deu Del 100', 'flower']]],
  [5, 2, 1, [['Deu Del 100', 'flower']]],
  [6, 2, 1, [['SpJ Del Ha1', 'flower', 'box'], ['SpM East Ha2', 'ring', 'box']]],
  [2, 3, 1, [['Deu Del 100', 'flower']]],
  [3, 3, 2, [['Eng Lop 100', 'apple']]],
  [4, 3, 2, [['Ma Bru 102', 'bloom']]],
  [5, 3, 1, [['Erd Lop 100 Projektor', 'apple']]],
  [6, 3, 1, [['Erd Lop 100 Projektor', 'apple']]],
  [2, 4, 1, [['Mu Con', 'apple', 'pause']]],
  [5, 4, 1, [['Mu Con', 'apple', 'pause']]],
  [6, 4, 1, [['Bio Del', 'flower']]]
];
const lesson = ([text, ico, ico2, selected]) => {
  const [subject, ...rest] = text.split(' ');
  const ma = subject === 'Ma';
  return `<article class="relative flex min-w-0 flex-1 bg-linear-to-b from-white to-[#f0f3f9] pt-[2px]">
    <span class="-mt-[2px] w-1 flex-none" style="background:${C[subject]}"></span>
    <div class="min-w-0 flex-1 ${ma ? 'pl-[2px]' : 'pl-1'}"><div class="${ma ? '-mb-px bg-[#ff80fc] pb-px pl-[2px] font-bold' : ''}">${subject}</div>${rest.map(t => `<div class="${ma ? 'pl-[2px]' : ''}">${t}</div>`).join('')}</div>
    <div class="flex flex-none flex-col items-end gap-[2px] pt-px pr-[3px] ${subject === 'Mu' ? 'text-[#0000ff]' : ico === 'apple' ? 'text-[#ff8000]' : 'text-black'}">${icon(ico)}${ico2 ? icon(ico2) : ''}</div>
    ${selected ? '<span class="absolute inset-0 border-2 border-r-[1px] border-[#ff00ff]"></span><span class="absolute top-0 -right-[3px] h-[78px] w-[3px] bg-[#ff00ff]"></span>' : ''}
  </article>`;
};
const place = (c, r, s) => `grid-column:${c};grid-row:${r}/span ${s}`;
document.getElementById('plan').innerHTML =
  times.map((t, i) => `<div class="flex justify-between border-t border-l border-[#86a6da] bg-[#bdd1ec] pt-px pr-[3px] pl-[4px]" style="${place(1, i + 1, 1)}"><span>${i + 1}</span><span>${t[0]}<br>${t[1]}</span></div>`).join('') +
  slots.map(([c, r, s, ls]) => `<div class="flex border-t border-l border-[#86a6da] bg-[#ccdaf1] pr-[3px]" style="${place(c, r, s)}">${ls.map(lesson).join('')}</div>`).join('');
</script>
</body>
</html>
